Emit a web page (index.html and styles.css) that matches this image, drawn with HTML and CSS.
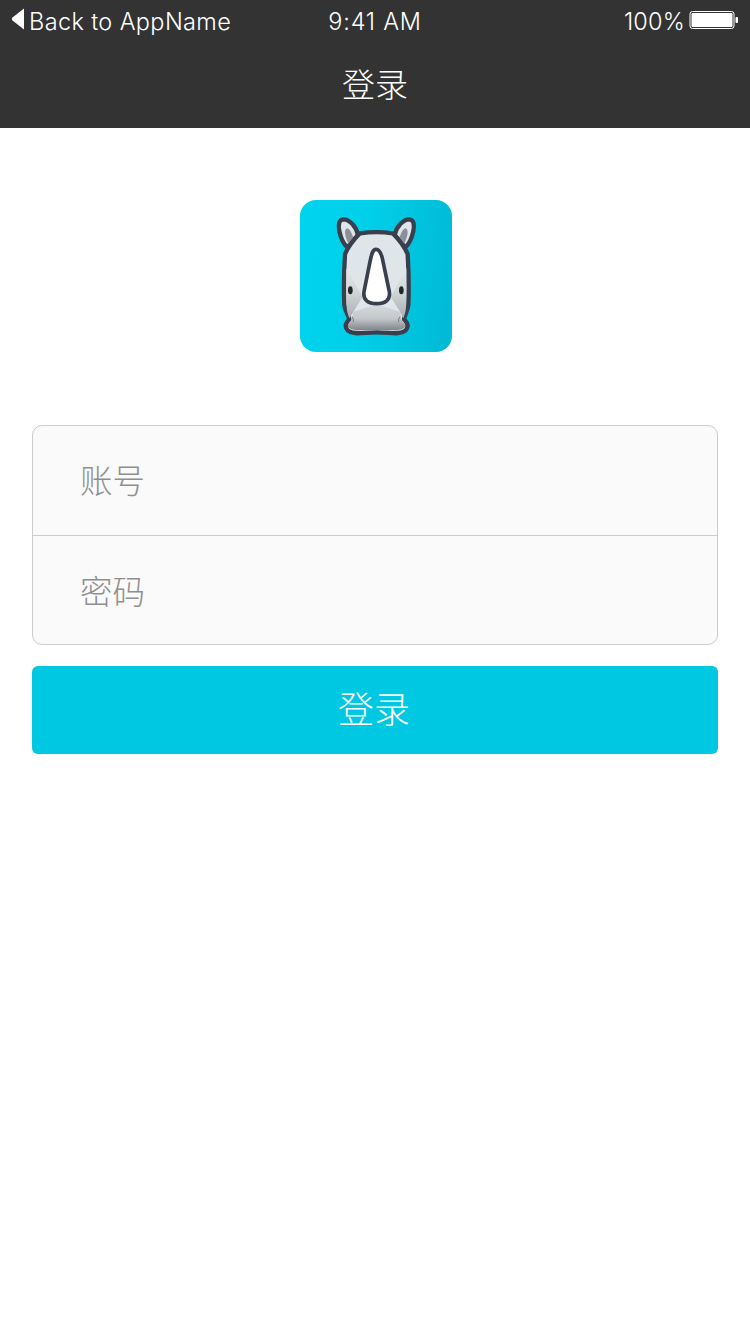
FILE: index.html
```html
<!DOCTYPE html>
<html lang="zh">
<head>
<meta charset="utf-8">
<title>登录</title>
<link rel="stylesheet" href="styles.css">
</head>
<body>
<header class="top">
  <div class="status">
    <div class="status-left">
      <svg class="back-tri" width="14" height="22" viewBox="0 0 14 22"><path d="M13 0.5V21.5L1.5 12.6Q0 11 1.5 9.4Z" fill="#fff"/></svg>
      <span>Back to AppName</span>
    </div>
    <div class="status-time">9:41 AM</div>
    <div class="status-right">
      <span>100%</span>
      <svg class="battery" width="50" height="20" viewBox="0 0 50 20">
        <rect x="1" y="1.5" width="44" height="17" rx="2.5" fill="none" stroke="#fff" stroke-width="1"/>
        <rect x="2.5" y="3" width="41" height="14" rx="1.2" fill="#fff"/>
        <rect x="46.5" y="7" width="2.5" height="6" rx="1" fill="#fff"/>
      </svg>
    </div>
  </div>
  <h1 class="title">登录</h1>
</header>
<main class="content">
  <div class="logo">
    <svg width="152" height="152" viewBox="30 30 456 456">
      <defs>
        <linearGradient id="bg" x1="0" y1="0.45" x2="1" y2="0.55">
          <stop offset="0" stop-color="#00d3ee"/>
          <stop offset="0.4" stop-color="#00d0ea"/>
          <stop offset="1" stop-color="#00bad6"/>
        </linearGradient>
        <linearGradient id="muzzle" x1="0" y1="0" x2="0" y2="1">
          <stop offset="0" stop-color="#d6dadc"/>
          <stop offset="0.55" stop-color="#c4c8ca"/>
          <stop offset="1" stop-color="#7f848b"/>
        </linearGradient>
        <linearGradient id="cheek" x1="0" y1="0" x2="0" y2="1">
          <stop offset="0" stop-color="#e2e8ec"/>
          <stop offset="0.5" stop-color="#cfd4d7"/>
          <stop offset="1" stop-color="#a8adb2"/>
        </linearGradient>
      </defs>
      <rect x="30" y="30" width="456" height="456" rx="48" fill="url(#bg)"/>
      <path d="M204 135C198 108 178 88 160 88C147 89 144 104 148 124C153 146 160 162 172 172Z" fill="#dfe6ea" stroke="#3a3f4d" stroke-width="13" stroke-linejoin="round"/>
      <path d="M314 135C320 108 340 88 358 88C371 89 374 104 370 124C365 146 358 162 346 172Z" fill="#dfe6ea" stroke="#3a3f4d" stroke-width="13" stroke-linejoin="round"/>
      <path d="M194 162C190 140 182 118 172 115C161 115 163 144 180 168Z" fill="#8b8f98"/>
      <path d="M324 162C328 140 336 118 346 115C357 115 355 144 338 168Z" fill="#8b8f98"/>
      <path d="M210 130Q260 123 308 130C326 148 342 168 353 192Q358 280 355 345C353 362 344 376 342 388C352 398 358 410 346 422C330 436 300 427 260 427C220 427 190 436 174 422C162 410 168 398 178 388C175 376 165 362 163 345Q160 280 165 192C176 168 192 148 210 130Z" fill="#dfe6ea" stroke="#3a3f4d" stroke-width="13" stroke-linejoin="round"/>
      <path d="M169 235L218 320L190 365L178 385C172 370 170 360 170 345Z" fill="url(#cheek)"/>
      <path d="M349 235L302 320L330 365L340 385C346 370 348 360 348 345Z" fill="url(#cheek)"/>
      <path d="M184 392L190 365L260 342L330 365L336 392C346 400 350 408 342 414C328 424 300 420 260 420C220 420 192 424 178 414C170 408 174 400 184 392Z" fill="url(#muzzle)"/>
      <path d="M258 178C249 178 245 190 240 215L222 305C218 330 235 341 260 341C285 341 302 330 298 305L277 205C273 188 267 178 258 178Z" fill="#fff" stroke="#3a3f4d" stroke-width="11" stroke-linejoin="round"/>
      <ellipse cx="181" cy="301" rx="7" ry="12" fill="#23262e"/>
      <ellipse cx="334" cy="301" rx="7" ry="12" fill="#23262e"/>
      <path d="M186 380Q192 386 190 396" fill="none" stroke="#777c82" stroke-width="3"/>
      <path d="M330 380Q324 386 326 396" fill="none" stroke="#777c82" stroke-width="3"/>
    </svg>
  </div>
  <form class="form">
    <div class="fields">
      <div class="field">账号</div>
      <div class="field">密码</div>
    </div>
    <button class="submit" type="button">登录</button>
  </form>
</main>
</body>
</html>
```
FILE: styles.css
```css
* { box-sizing: border-box; }
html, body { margin: 0; padding: 0; background: #fff; }
body {
  width: 750px;
  height: 1334px;
  overflow: hidden;
  font-family: "Noto Sans CJK SC", "Noto Sans", sans-serif;
}
.top {
  height: 128px;
  background: #333;
  color: #fff;
}
.status {
  height: 44px;
  display: grid;
  grid-template-columns: 1fr auto 1fr;
  align-items: center;
  font-family: Inter, Roboto, sans-serif;
  font-size: 23.5px;
  font-weight: 300;
  line-height: 44px;
}
.status-left {
  display: flex;
  align-items: center;
  gap: 4px;
  padding-left: 11px;
}
.back-tri { display: block; margin-top: -6px; }
.status-left span { letter-spacing: 0.37px; }
.status-time { letter-spacing: 0.75px; }
.status-right {
  display: flex;
  align-items: center;
  justify-content: flex-end;
  gap: 4px;
  padding-right: 11px;
}
.status-right span { letter-spacing: 0.2px; }
.battery { display: block; margin-top: -4px; }
.title {
  margin: 0;
  height: 84px;
  padding-bottom: 6px;
  display: flex;
  align-items: center;
  justify-content: center;
  font-size: 33px;
  font-weight: 300;
  line-height: 40px;
}
.content {
  padding: 72px 32px 0;
}
.logo {
  display: flex;
  justify-content: center;
  padding-left: 2px;
  height: 152px;
}
.logo svg { display: block; }
.form { margin-top: 73px; }
.fields {
  background: #fafafa;
  border: 1px solid #ccc;
  border-radius: 10px;
  height: 220px;
  display: grid;
  grid-template-rows: 109px 109px;
}
.field {
  display: flex;
  align-items: center;
  padding: 0 0 4px 47px;
  font-size: 32.5px;
  font-weight: 300;
  color: #8f8f8f;
}
.field + .field { border-top: 1px solid #ccc; padding-bottom: 2px; }
.submit {
  display: block;
  width: 100%;
  height: 88px;
  margin-top: 21px;
  padding: 0 2px 6px 0;
  border: 0;
  border-radius: 6px;
  background: #00c7e2;
  color: #fff;
  font-family: inherit;
  font-size: 36px;
  font-weight: 300;
}
```
